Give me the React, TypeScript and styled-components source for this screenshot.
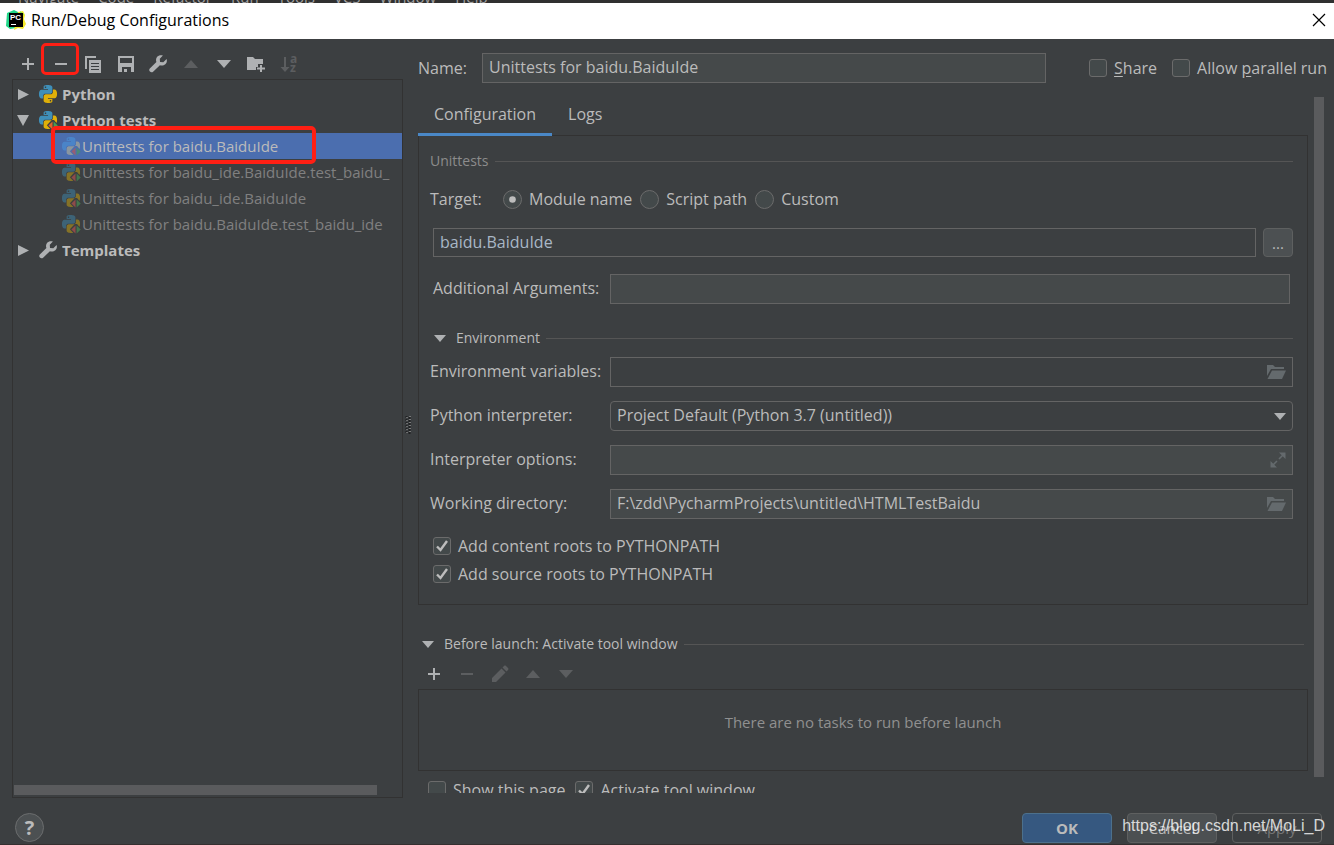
import React, { useId } from 'react';
import styled, { createGlobalStyle, css } from 'styled-components';

const c = {
  bg: '#3c3f41',
  field: '#45494a',
  border: '#646464',
  frame: '#323232',
  line: '#555555',
  text: '#bbbbbb',
  dim: '#808080',
  icon: '#afb1b3',
  iconOff: '#5c5e60',
  select: '#4b6eaf',
  thumb: '#5a5b5d',
  red: '#ff1f14',
};

const GlobalStyle = createGlobalStyle`
  * { box-sizing: border-box; }
  body {
    margin: 0;
    background: ${c.bg};
    color: ${c.text};
    font-family: "Open Sans", "Noto Sans", sans-serif;
    font-size: 16px;
    line-height: 20px;
  }
  button, input, select { font: inherit; color: inherit; margin: 0; }
`;

/* Window frame */
const Window = styled.div`
  position: relative;
  display: flex;
  flex-direction: column;
  height: 100vh;
  overflow: hidden;
  border-bottom: 1px solid #352f30;
`;

const MenuStrip = styled.nav`
  display: flex;
  align-items: flex-end;
  gap: 19px;
  flex: none;
  height: 3px;
  padding-left: 18px;
  overflow: hidden;
  background: #303030;
  color: #a0a0a0;
  font-size: 15px;
  line-height: 12px;
`;

const TitleBar = styled.header`
  display: flex;
  align-items: center;
  gap: 5px;
  flex: none;
  height: 36px;
  padding: 0 8px 2px 6px;
  background: #ffffff;
  color: #000000;
`;

const Title = styled.h1`
  flex: 1;
  margin: 0;
  font-size: 16px;
  font-weight: 400;
`;

const IconButton = styled.button`
  position: relative;
  display: grid;
  place-items: center;
  height: 20px;
  padding: 0;
  border: 0;
  background: none;
`;

const Body = styled.main`
  display: flex;
  flex: 1;
  min-height: 0;
`;

/* Left side */
const Sidebar = styled.section`
  display: flex;
  flex-direction: column;
  flex: none;
  width: 403px;
  padding: 15px 0 0 12px;
`;

const Toolbar = styled.div`
  display: grid;
  grid-template-columns: repeat(9, 1fr);
  width: 293px;
  margin-bottom: 5px;
`;

const TreeBox = styled.div`
  display: flex;
  flex-direction: column;
  justify-content: space-between;
  flex: 1;
  padding: 1px 0;
  border: 1px solid ${c.frame};
`;

const Tree = styled.ul`
  margin: 0;
  padding: 0;
  list-style: none;
`;

const TreeRow = styled.li<{ $child?: boolean; $selected?: boolean }>`
  position: relative;
  display: flex;
  align-items: center;
  gap: ${p => (p.$child ? 2 : 5)}px;
  height: 26px;
  padding-left: ${p => (p.$child ? 49 : 4)}px;
  font-size: 15px;
  font-weight: ${p => (p.$child ? 400 : 700)};
  color: ${p => (p.$child && !p.$selected ? c.dim : c.text)};
  background: ${p => (p.$selected ? c.select : 'none')};
`;

const RowText = styled.span`
  flex: 1;
  min-width: 0;
  overflow: hidden;
  white-space: nowrap;
`;

const Twisty = styled.svg`
  flex: none;
  margin-right: 4px;
`;

const HorizontalThumb = styled.div`
  width: 363px;
  height: 10px;
  margin: 0 0 1px 1px;
  background: ${c.thumb};
`;

const Highlight = styled.span<{ $area: 'button' | 'row' }>`
  position: absolute;
  z-index: 2;
  border: 3px solid ${c.red};
  border-radius: 5px;
  pointer-events: none;
  ${p =>
    p.$area === 'button'
      ? css`inset: -11px -2px -1px -4px;`
      : css`inset: -7px 86px -5px 38px; border-width: 4px;`}
`;

const Splitter = styled.div`
  display: grid;
  place-items: center;
  flex: none;
  width: 15px;
  padding: 12px 6px 0 0;
`;

/* Right side */
const Editor = styled.section`
  display: flex;
  flex-direction: column;
  flex: 1;
  min-width: 0;
  padding-bottom: 5px;
`;

const NameRow = styled.div`
  display: flex;
  align-items: center;
  flex: none;
  height: 58px;
  padding-right: 7px;
`;

const NameLabel = styled.label`
  flex: none;
  width: 64px;
`;

const NameOptions = styled.div`
  display: flex;
  gap: 15px;
  margin-left: 43px;
`;

const Field = styled.input<{ $plain?: boolean }>`
  flex: 1;
  width: 100%;
  min-width: 0;
  height: 30px;
  padding: 0 6px 2px;
  border: 1px solid ${c.border};
  border-radius: 0;
  outline: 0;
  background: ${p => (p.$plain ? c.bg : c.field)};
`;

const ScrollArea = styled.div`
  display: flex;
  align-items: flex-start;
  gap: 6px;
  flex: 1;
  min-height: 0;
  padding-right: 10px;
`;

const ScrollContent = styled.div`
  flex: 1;
  min-width: 0;
  height: 100%;
  overflow: hidden;
`;

const VerticalThumb = styled.div`
  flex: none;
  width: 10px;
  height: calc(100% - 16px);
  background: ${c.thumb};
`;

const Tabs = styled.div`
  display: flex;
  height: 39px;
`;

const Tab = styled.button<{ $active?: boolean }>`
  padding: 0 16px 2px;
  border: 0;
  border-bottom: 3px solid ${p => (p.$active ? '#4a88c7' : 'transparent')};
  background: none;
`;

const Panel = styled.div`
  margin: -1px 0 29px;
  padding: 15px 14px 20px 11px;
  border: 1px solid ${c.frame};
`;

const Heading = styled.h2<{ $dim?: boolean }>`
  display: flex;
  align-items: center;
  gap: 6px;
  margin: 0;
  font-size: 14px;
  font-weight: 400;
  color: ${p => (p.$dim ? '#8c8c8c' : c.text)};

  &::after {
    content: '';
    flex: 1;
    height: 1px;
    background: ${c.line};
  }
`;

const Collapse = styled.svg`
  margin: 0 4px;
`;

const EnvironmentHeading = styled(Heading)`
  margin: 24px 0 9px;
`;

const LaunchHeading = styled(Heading)`
  padding-right: 4px;
`;

const TargetRow = styled.div`
  display: flex;
  align-items: center;
  gap: 8px;
  margin: 18px 0 19px;
`;

const TargetLabel = styled.span`
  width: 65px;
`;

const ModuleRow = styled.div`
  display: flex;
  gap: 7px;
  padding-left: 3px;
  color: #a9b7c6;
  > * { height: 29px; }
`;

const Button = styled.button<{ $kind?: 'primary' | 'disabled' | 'small' }>`
  width: 90px;
  height: 30px;
  padding: 0;
  border: 1px solid #5e6060;
  border-radius: 4px;
  background: #4c5052;
  color: ${c.text};
  font-size: 15px;
  ${p => p.$kind === 'primary' && css`
    border-color: #4c708c;
    background: #365880;
    font-weight: 700;
  `}
  ${p => p.$kind === 'disabled' && css`
    background: none;
    color: #777777;
  `}
  ${p => p.$kind === 'small' && css`
    width: 30px;
    height: 29px;
  `}
`;

const ArgumentsRow = styled.div`
  display: grid;
  grid-template-columns: 177px 1fr;
  align-items: center;
  margin: 17px 3px 0;
  label { padding-bottom: 2px; }
`;

const Form = styled.div`
  display: grid;
  grid-template-columns: 180px 1fr;
  align-items: center;
  row-gap: 14px;
  label { padding-bottom: 2px; }
`;

const FieldStack = styled.div`
  display: grid;
  align-items: center;
  > * { grid-area: 1 / 1; }
  > svg { justify-self: end; margin-right: 7px; pointer-events: none; }
`;

const Select = styled.select`
  appearance: none;
  width: 100%;
  height: 30px;
  padding: 0 6px 2px;
  border: 1px solid ${c.border};
  border-radius: 4px;
  outline: 0;
  background: ${c.bg};
`;

const CheckLabel = styled.label`
  display: flex;
  align-items: center;
  gap: 7px;
  height: 20px;
  white-space: nowrap;
  u { text-underline-offset: 2px; }
`;

const CheckStack = styled.span`
  display: grid;
  place-items: center;
  > * { grid-area: 1 / 1; }
  > svg { display: none; pointer-events: none; }
  > input:checked + svg { display: block; }
`;

const Box = styled.input<{ $round?: boolean }>`
  appearance: none;
  width: ${p => (p.$round ? 19 : 18)}px;
  height: ${p => (p.$round ? 19 : 18)}px;
  border: 1px solid #6b6b6b;
  border-radius: ${p => (p.$round ? '50%' : '3px')};
  background: #43494a;
`;

const PathOptions = styled.div`
  display: grid;
  gap: 8px;
  justify-content: start;
  margin: 17px 0 0 3px;
`;

const LaunchToolbar = styled.div`
  display: grid;
  grid-template-columns: repeat(5, 1fr);
  width: 164px;
  margin: 10px 0 5px;
`;

const LaunchList = styled.div`
  display: grid;
  place-items: center;
  height: 82px;
  padding-bottom: 16px;
  border: 1px solid ${c.frame};
  color: #909090;
  font-size: 15px;
`;

const LaunchOptions = styled.div`
  display: flex;
  gap: 10px;
  padding: 9px 0 0 10px;
`;

const Footer = styled.footer`
  display: flex;
  align-items: flex-start;
  gap: 15px;
  flex: none;
  height: 46px;
  padding: 15px 12px 0 15px;
`;

const HelpButton = styled.button`
  width: 29px;
  height: 29px;
  margin-right: auto;
  padding: 0;
  border: 1px solid #6b6d6e;
  border-radius: 50%;
  background: #4c5052;
  font-size: 20px;
  font-weight: 700;
`;

const Watermark = styled.span`
  position: absolute;
  right: 9px;
  bottom: 8px;
  color: rgba(255, 255, 255, 0.8);
  font-family: "Liberation Sans", sans-serif;
  pointer-events: none;
`;

/* Icons */
const snake =
  'M14.25.18l.9.2.73.26.59.3.45.32.34.34.25.34.16.33.1.3.04.26.02.2-.01.13V8.5l-.05.63-.13.55-.21.46-.26.38-.3.31-.33.25-.35.19-.35.14-.33.1-.3.07-.26.04-.21.02H8.77l-.69.05-.59.14-.5.22-.41.27-.33.32-.27.35-.2.36-.15.37-.1.35-.07.32-.04.27-.02.21v3.06H3.17l-.21-.03-.28-.07-.32-.12-.35-.18-.36-.26-.36-.36-.35-.46-.32-.59-.28-.73-.21-.88-.14-1.05-.05-1.23.06-1.22.16-1.04.24-.87.32-.71.36-.57.4-.44.42-.33.42-.24.4-.16.36-.1.32-.05.24-.01h.16l.06.01h8.16v-.83H6.18l-.01-2.75-.02-.37.05-.34.11-.31.17-.28.25-.26.31-.23.38-.2.44-.18.51-.15.58-.12.64-.1.71-.06.77-.04.84-.02 1.27.05zm-6.3 1.98l-.23.33-.08.41.08.41.23.34.33.22.41.09.41-.09.33-.22.23-.34.08-.41-.08-.41-.23-.33-.33-.22-.41-.09-.41.09z';

const wrench =
  'M17.6 4.1 14.3 7.2 11 6.9 10.8 3.7 13.9.5C11.700-.2 9.300.4 8 2 6.800 3.500 6.800 5.400 7.400 7L.8 13.500C0 14.400 0 15.700.9 16.600 1.800 17.500 3.200 17.600 4.100 16.700L10.900 10.200C12.700 10.900 14.800 10.600 16.300 9.200 17.800 7.900 18.200 5.900 17.600 4.100Z';

function PythonIcon({ test, faded, back = c.bg }: { test?: boolean; faded?: boolean; back?: string }) {
  return (
    <svg width="18" height="18" viewBox="0 0 24 24" overflow="visible" aria-hidden="true">
      <g opacity={faded ? 0.45 : 1}>
        <path d={snake} fill={back === c.select ? '#4aa0e8' : '#3f8fb8'} />
        <path d={snake} fill={back === c.select ? '#d8c890' : '#dfb009'} transform="rotate(180 12 12)" />
      </g>
      {test && (
        <>
          <path d="M10.500 19 17 12H20L26 19 20 26H17Z" fill={back} />
          <g opacity={faded ? 0.6 : 1}>
            <path d="M18 14V24.500L12.500 19.200Z" fill={faded ? '#c75450' : '#e0662c'} />
            <path d="M19.500 14V24.500L25 19.200Z" fill="#499c54" />
          </g>
        </>
      )}
    </svg>
  );
}

const WrenchIcon = () => (
  <svg width="18" height="18" viewBox="0 0 18 18" fill={c.icon} aria-hidden="true">
    <path d={wrench} />
  </svg>
);

const AddIcon = () => (
  <svg width="14" height="14" viewBox="0 0 14 14" fill={c.icon} aria-hidden="true">
    <path d="M6 1H8V6H13V8H8V13H6V8H1V6H6Z" />
  </svg>
);

const RemoveIcon = ({ off }: { off?: boolean }) => (
  <svg width="14" height="14" viewBox="0 0 14 14" fill={off ? c.iconOff : c.icon} aria-hidden="true">
    <path d="M1 6H13V8H1Z" />
  </svg>
);

const UpIcon = () => (
  <svg width="14" height="8" viewBox="0 0 14 8" fill={c.iconOff} aria-hidden="true">
    <path d="M0 8 7 0 14 8Z" />
  </svg>
);

const DownIcon = ({ off }: { off?: boolean }) => (
  <svg width="14" height="8" viewBox="0 0 14 8" fill={off ? c.iconOff : c.icon} aria-hidden="true">
    <path d="M0 0H14L7 8Z" />
  </svg>
);

const FolderIcon = () => (
  <svg width="19" height="14" viewBox="0 0 19 14" fill="#646a6d" aria-hidden="true">
    <path d="M0 0H6L8 2H17V4H4L0 11Z" />
    <path d="M5 5.500H19L15 14H0.500Z" />
  </svg>
);

const ExpandIcon = () => (
  <svg width="16" height="16" viewBox="0 0 16 16" fill="#646a6d" stroke="#646a6d" aria-hidden="true">
    <path d="M9 .5H15.500V7ZM.5 9V15.500H7Z" stroke="none" />
    <path d="M9 7 13 3M7 9 3 13" strokeWidth="1.600" />
  </svg>
);

const SmallArrow = ({ className }: { className?: string }) => (
  <svg className={className} width="12" height="7" viewBox="0 0 12 7" fill={c.icon} aria-hidden="true">
    <path d="M0 0H12L6 7Z" />
  </svg>
);

const CheckMark = () => (
  <svg width="14" height="14" viewBox="0 0 14 14" fill="none" stroke="#bdbdbd" strokeWidth="2.400" aria-hidden="true">
    <path d="M2 7.500 5.500 11 12 2" />
  </svg>
);

const RadioDot = () => (
  <svg width="7" height="7" viewBox="0 0 7 7" fill="#bdbdbd" aria-hidden="true">
    <circle cx="3.500" cy="3.500" r="3.300" />
  </svg>
);

function Check({ checked, children }: { checked?: boolean; children: React.ReactNode }) {
  return (
    <CheckLabel>
      <CheckStack>
        <Box type="checkbox" defaultChecked={checked} />
        <CheckMark />
      </CheckStack>
      <span>{children}</span>
    </CheckLabel>
  );
}

function Radio({ checked, children }: { checked?: boolean; children: React.ReactNode }) {
  return (
    <CheckLabel>
      <CheckStack>
        <Box type="radio" name="target" $round defaultChecked={checked} />
        <RadioDot />
      </CheckStack>
      <span>{children}</span>
    </CheckLabel>
  );
}

function FormField({ label, value, plain, icon }: {
  label: string; value?: string; plain?: boolean; icon: React.ReactNode;
}) {
  const id = useId();
  return (
    <>
      <label htmlFor={id}>{label}</label>
      <FieldStack>
        <Field id={id} $plain={plain} defaultValue={value} />
        {icon}
      </FieldStack>
    </>
  );
}

function Group({ open, icon, children }: { open?: boolean; icon: React.ReactNode; children: string }) {
  return (
    <TreeRow role="treeitem" aria-expanded={!!open}>
      <Twisty width="13" height="13" viewBox="0 0 13 13" fill={c.icon} aria-hidden="true">
        <path d={open ? 'M0 1H12L6 12Z' : 'M1 1 12 6.500 1 12Z'} />
      </Twisty>
      {icon}
      <RowText>{children}</RowText>
    </TreeRow>
  );
}

const tests = [
  'Unittests for baidu.BaiduIde',
  'Unittests for baidu_ide.BaiduIde.test_baidu_',
  'Unittests for baidu_ide.BaiduIde',
  'Unittests for baidu.BaiduIde.test_baidu_ide',
];

const menus = ['Navigate', 'Code', 'Refactor', 'Run', 'Tools', 'VCS', 'Window', 'Help'];

export default function App() {
  return (
    <Window>
      <GlobalStyle />
      <MenuStrip>
        {menus.map(m => <span key={m}>{m}</span>)}
      </MenuStrip>
      <TitleBar>
        <svg width="20" height="20" viewBox="0 0 20 20" aria-hidden="true">
          <path d="M1 3 8 0 14 3 10 18 4 19 0 16Z" fill="#21d789" />
          <path d="M12 2 17 1 19 5 18 9 20 14 17 19 12 18 8 20Z" fill="#f5ea2c" />
          <path d="M14 1 18 4 15 9Z" fill="#7be35c" />
          <rect x="3" y="3" width="14" height="14" fill="#000000" />
          <text x="4" y="10" fill="#ffffff" fontSize="8" fontWeight="700" fontFamily="Liberation Sans, sans-serif">PC</text>
          <rect x="5" y="14" width="5" height="1" fill="#ffffff" />
        </svg>
        <Title>Run/Debug Configurations</Title>
        <IconButton aria-label="Close">
          <svg width="14" height="14" viewBox="0 0 14 14" stroke="#000000" strokeWidth="1.200" aria-hidden="true">
            <path d="M1 1 13 13M13 1 1 13" />
          </svg>
        </IconButton>
      </TitleBar>

      <Body>
        <Sidebar>
          <Toolbar>
            <IconButton aria-label="Add"><AddIcon /></IconButton>
            <IconButton aria-label="Remove">
              <RemoveIcon />
              <Highlight $area="button" />
            </IconButton>
            <IconButton aria-label="Copy">
              <svg width="16" height="17" viewBox="0 0 16 17" fill={c.icon} aria-hidden="true">
                <path d="M0 0H11V2H2V13H0Z" />
                <path fillRule="evenodd" d="M4 4H16V17H4ZM6 7V8H14V7ZM6 10V11H14V10ZM6 13V14H14V13Z" />
              </svg>
            </IconButton>
            <IconButton aria-label="Save">
              <svg width="16" height="16" viewBox="0 0 16 16" fill={c.icon} aria-hidden="true">
                <path fillRule="evenodd" d="M0 0H16V16H13V11H4V16H0ZM2 2V7H14V2ZM6 13H9V16H6Z" />
              </svg>
            </IconButton>
            <IconButton aria-label="Edit templates"><WrenchIcon /></IconButton>
            <IconButton aria-label="Move up"><UpIcon /></IconButton>
            <IconButton aria-label="Move down"><DownIcon /></IconButton>
            <IconButton aria-label="New folder">
              <svg width="18" height="16" viewBox="0 0 18 16" fill={c.icon} aria-hidden="true">
                <path d="M0 1H6L8 3H16V8H11V11H9V14H0Z" />
                <path d="M13 9H15V11.500H18V13.500H15V16H13V13.500H10V11.500H13Z" />
              </svg>
            </IconButton>
            <IconButton aria-label="Sort">
              <svg width="17" height="17" viewBox="0 0 17 17" fill={c.iconOff} overflow="visible" aria-hidden="true">
                <path d="M4 1H6V11H9.500L5 16 .5 11H4Z" />
                <text x="10" y="7" fontSize="12" fontWeight="700">a</text>
                <text x="10" y="16" fontSize="12" fontWeight="700">z</text>
              </svg>
            </IconButton>
          </Toolbar>
          <TreeBox>
            <Tree role="tree">
              <Group icon={<PythonIcon />}>Python</Group>
              <Group open icon={<PythonIcon test />}>Python tests</Group>
              {tests.map((t, i) => (
                <TreeRow key={t} role="treeitem" $child $selected={i === 0}>
                  <PythonIcon test faded back={i === 0 ? c.select : c.bg} />
                  <RowText>{t}</RowText>
                  {i === 0 && <Highlight $area="row" />}
                </TreeRow>
              ))}
              <Group icon={<WrenchIcon />}>Templates</Group>
            </Tree>
            <HorizontalThumb />
          </TreeBox>
        </Sidebar>

        <Splitter>
          <svg width="6" height="18" viewBox="0 0 6 18" aria-hidden="true">
            <path d="M1.500 0V18M4.500 1V18" stroke="#1f2122" strokeWidth="2" strokeDasharray="2 1" />
            <path d="M2 1V18M5 0V18" stroke="#b5b5b5" strokeDasharray="1 2" />
          </svg>
        </Splitter>

        <Editor>
          <NameRow>
            <NameLabel htmlFor="name">Name:</NameLabel>
            <Field id="name" defaultValue="Unittests for baidu.BaiduIde" />
            <NameOptions>
              <Check><u>S</u>hare</Check>
              <Check>Allow <u>p</u>arallel run</Check>
            </NameOptions>
          </NameRow>
          <ScrollArea>
            <ScrollContent>
              <Tabs role="tablist">
                <Tab role="tab" aria-selected $active>Configuration</Tab>
                <Tab role="tab">Logs</Tab>
              </Tabs>
              <Panel>
                <Heading $dim>Unittests</Heading>
                <TargetRow role="radiogroup" aria-label="Target">
                  <TargetLabel>Target:</TargetLabel>
                  <Radio checked>Module name</Radio>
                  <Radio>Script path</Radio>
                  <Radio>Custom</Radio>
                </TargetRow>
                <ModuleRow>
                  <Field $plain aria-label="Module name" defaultValue="baidu.BaiduIde" />
                  <Button $kind="small">...</Button>
                </ModuleRow>
                <ArgumentsRow>
                  <label htmlFor="arguments">Additional Arguments:</label>
                  <Field id="arguments" />
                </ArgumentsRow>
                <EnvironmentHeading>
                  <Collapse as={SmallArrow} />
                  Environment
                </EnvironmentHeading>
                <Form>
                  <FormField label="Environment variables:" plain icon={<FolderIcon />} />
                  <label htmlFor="interpreter">Python interpreter:</label>
                  <FieldStack>
                    <Select id="interpreter">
                      <option>Project Default (Python 3.7 (untitled))</option>
                    </Select>
                    <SmallArrow />
                  </FieldStack>
                  <FormField label="Interpreter options:" icon={<ExpandIcon />} />
                  <FormField
                    label="Working directory:"
                    value="F:\zdd\PycharmProjects\untitled\HTMLTestBaidu"
                    icon={<FolderIcon />}
                  />
                </Form>
                <PathOptions>
                  <Check checked>Add content roots to PYTHONPATH</Check>
                  <Check checked>Add source roots to PYTHONPATH</Check>
                </PathOptions>
              </Panel>

              <LaunchHeading>
                <Collapse as={SmallArrow} />
                Before launch: Activate tool window
              </LaunchHeading>
              <LaunchToolbar>
                <IconButton aria-label="Add task"><AddIcon /></IconButton>
                <IconButton aria-label="Remove task"><RemoveIcon off /></IconButton>
                <IconButton aria-label="Edit task">
                  <svg width="18" height="18" viewBox="0 0 18 18" fill={c.iconOff} aria-hidden="true">
                    <path d="M1 13 10.500 3.500 14.500 7.500 5 17H1ZM11.500 2.500 13 1C13.600.4 14.400.4 15 1L17 3C17.600 3.600 17.600 4.400 17 5L15.500 6.500Z" />
                  </svg>
                </IconButton>
                <IconButton aria-label="Move task up"><UpIcon /></IconButton>
                <IconButton aria-label="Move task down"><DownIcon off /></IconButton>
              </LaunchToolbar>
              <LaunchList>There are no tasks to run before launch</LaunchList>
              <LaunchOptions>
                <Check>Show this page</Check>
                <Check checked>Activate tool window</Check>
              </LaunchOptions>
            </ScrollContent>
            <VerticalThumb />
          </ScrollArea>
        </Editor>
      </Body>

      <Footer>
        <HelpButton aria-label="Help">?</HelpButton>
        <Button $kind="primary">OK</Button>
        <Button>Cancel</Button>
        <Button $kind="disabled">Apply</Button>
      </Footer>
      <Watermark>https://blog.csdn.net/MoLi_D</Watermark>
    </Window>
  );
}
